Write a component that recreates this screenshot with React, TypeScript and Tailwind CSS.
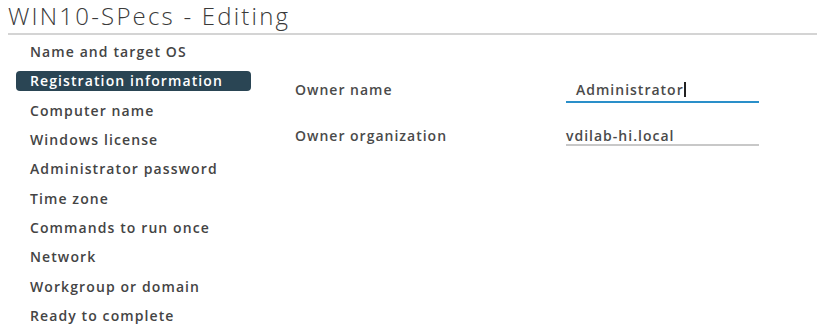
import React from 'react';

const steps = [
  'Name and target OS',
  'Registration information',
  'Computer name',
  'Windows license',
  'Administrator password',
  'Time zone',
  'Commands to run once',
  'Network',
  'Workgroup or domain',
  'Ready to complete',
];

const App: React.FC = () => {
  const active = 1;

  return (
    <div className="w-[817px] h-[332px] bg-white overflow-hidden font-['Open_Sans',sans-serif]">
      {/* Header */}
      <div className="h-[35px] ml-[8px] border-b-2 border-[#d4d4d4] flex items-end">
        <h1 className="text-[24px] leading-[35px] font-light text-[#3a3a3a] tracking-[2.2px]">
          WIN10-SPecs - Editing
        </h1>
      </div>

      <div className="flex">
        {/* Steps */}
        <div className="flex flex-col pt-[2px] ml-[16px] w-[235px]">
          {steps.map((step, i) => (
            <div key={step} className="h-[29.33px] flex items-center">
              <div
                className={`w-full h-[20px] flex items-center px-[14px] rounded-[4px] text-[14px] font-semibold tracking-[1.1px] whitespace-nowrap ${
                  i === active ? 'bg-[#2a4554] text-white' : 'text-[#444]'
                }`}
              >
                {step}
              </div>
            </div>
          ))}
        </div>

        {/* Form */}
        <div className="ml-[44px] pt-[43px] flex flex-col gap-[23px] text-[14px] font-semibold tracking-[1px] text-[#4a4a4a]">
          <div className="flex items-start">
            <span className="w-[271px] pt-[2px] leading-[20px]">Owner name</span>
            <div className="w-[193px] h-[25px] border-b-2 border-[#2a8fc9] pl-[10px] leading-[24px]">
              Administrator<span className="inline-block w-[2px] h-[15px] bg-[#222] align-[-2px]" />
            </div>
          </div>
          <div className="flex items-start">
            <span className="w-[271px] leading-[20px]">Owner organization</span>
            <div className="w-[193px] h-[20px] border-b-2 border-[#c8c8c8] leading-[20px]">
              vdilab-hi.local
            </div>
          </div>
        </div>
      </div>
    </div>
  );
};

export default App;
